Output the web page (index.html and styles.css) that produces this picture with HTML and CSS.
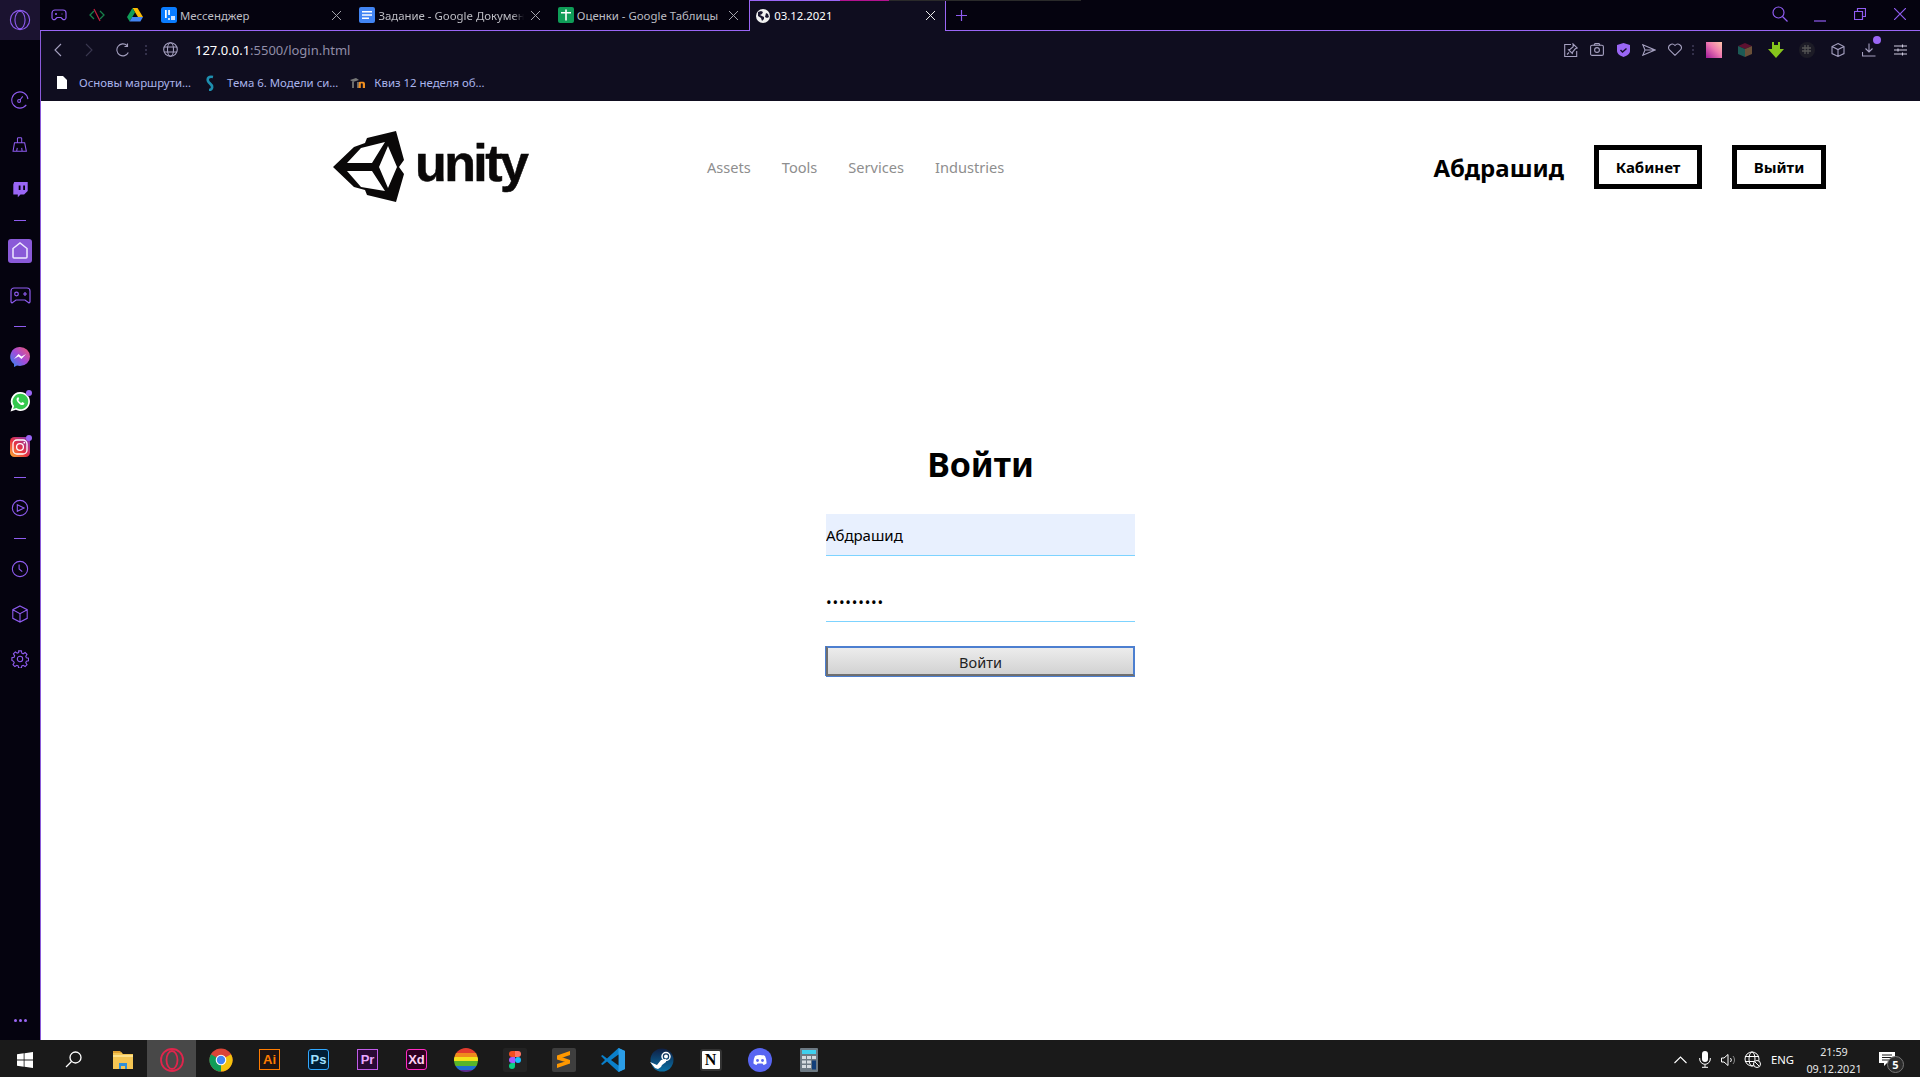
FILE: index.html
```html
<!DOCTYPE html>
<html lang="ru">
<head>
<meta charset="utf-8">
<title>03.12.2021</title>
<link rel="stylesheet" href="styles.css">
</head>
<body>
<div class="window">
  <aside class="sidebar">
    <div class="side-logo"><svg width="22" height="22" viewBox="0 0 24 24" class="ln"><circle cx="12" cy="12" r="10.5"/><ellipse cx="12" cy="12" rx="5.5" ry="9.5"/></svg></div>
    <div class="side-list">
      <div class="side-item"><svg width="18" height="18" viewBox="0 0 20 20" class="ln"><path d="M17 15.500A9 9 0 1 1 18.800 9"/><circle cx="9" cy="11" r="1.600"/><path d="M10 10l3-4"/></svg></div>
      <div class="side-item"><svg width="16" height="17" viewBox="0 0 18 20" class="ln"><path d="M6 8V3a1 1 0 0 1 1-1h3a1 1 0 0 1 1 1v5M2.500 8h12l2 10H.8zM5 18l.8-4M11.500 18l-.5-4"/></svg></div>
      <div class="side-item"><svg width="17" height="18" viewBox="0 0 18 20"><path class="fl" d="M2 1h15v10l-4 4H9l-3 3v-3H1V4z"/><path class="cut" d="M7 5h2v5H7zM12 5h2v5h-2z"/></svg></div>
      <div class="side-dash"></div>
      <div class="side-item"><div class="home-box"><svg width="16" height="17" viewBox="0 0 16 17" class="wln"><path d="M1 6.500L8 1l7 5.500V15a1 1 0 0 1-1 1H2a1 1 0 0 1-1-1z"/></svg></div></div>
      <div class="side-item"><svg width="21" height="17" viewBox="0 0 21 17" class="ln"><path d="M4 1h13a3 3 0 0 1 3 3v11l-1 1-4-3H6l-4 3-1-1V4a3 3 0 0 1 3-3z"/><circle cx="6.500" cy="7" r="1.800"/><path d="M13 7h4M15 5v4"/></svg></div>
      <div class="side-dash"></div>
      <div class="side-item"><svg width="20" height="20" viewBox="0 0 20 20"><defs><linearGradient id="msg" x1="0" y1="1" x2="1" y2="0"><stop offset="0" stop-color="#2a8cf5"/><stop offset=".5" stop-color="#a44bd8"/><stop offset="1" stop-color="#f5586a"/></linearGradient></defs><path d="M10 0a10 9.500 0 0 1 0 19 11 11 0 0 1-3-.4L4 20v-3A9.500 9.500 0 0 1 10 0z" fill="url(#msg)"/><path d="M4 12l4.500-5 3 2.500L16 7l-4.500 5-3-2.500z" fill="#fff"/></svg></div>
      <div class="side-item badged"><svg width="20" height="20" viewBox="0 0 20 20"><path d="M10.500 0a9.500 9.500 0 1 1-4.700 17.800L.5 19.500l1.700-5A9.500 9.500 0 0 1 10.500 0z" fill="#fff"/><path d="M10.500 1.700a7.800 7.800 0 1 1-4.200 14.400l-3.200 1 1-3A7.800 7.800 0 0 1 10.500 1.700z" fill="#35c94e"/><path d="M7.500 5.500c-1.500 1-1.200 3 .5 5s4 3.200 5.500 2.300c.8-.6 1-1.500.7-1.800l-2-1-.9 1c-1.200-.4-2.500-1.800-3-3l.9-.9-.9-2z" fill="#fff"/></svg><span class="dot"></span></div>
      <div class="side-item badged"><svg width="20" height="20" viewBox="0 0 20 20"><defs><linearGradient id="ig" x1="0" y1="1" x2="1" y2="0"><stop offset="0" stop-color="#fdb333"/><stop offset=".45" stop-color="#e8333f"/><stop offset="1" stop-color="#7c34c4"/></linearGradient></defs><rect width="20" height="20" rx="4.500" fill="url(#ig)"/><rect x="3" y="3" width="14" height="14" rx="4" fill="none" stroke="#fff" stroke-width="1.300"/><circle cx="10" cy="10" r="3.400" fill="none" stroke="#fff" stroke-width="1.300"/><circle cx="14.300" cy="5.700" r=".9" fill="#fff"/></svg><span class="dot"></span></div>
      <div class="side-dash"></div>
      <div class="side-item"><svg width="18" height="18" viewBox="0 0 20 20" class="ln"><circle cx="10" cy="10" r="8.500"/><path d="M7 6.300L14.500 10 7 13.700z"/></svg></div>
      <div class="side-dash"></div>
      <div class="side-item"><svg width="18" height="18" viewBox="0 0 20 20" class="ln"><circle cx="10" cy="10" r="8.500"/><path d="M9 5v5l3.500 3"/></svg></div>
      <div class="side-item"><svg width="18" height="18" viewBox="0 0 20 20" class="ln"><path d="M10 1l8 4.200v9.600L10 19l-8-4.200V5.200zM2 5.200l8 4.400 8-4.400M10 9.600V19"/></svg></div>
      <div class="side-item"><svg width="18" height="18" viewBox="0 0 20 20" class="ln"><circle cx="10" cy="10" r="3"/><path d="M8.500 1h3l.5 2.500 1.500.7 2.200-1.400 2.100 2.100-1.400 2.200.7 1.500 2.400.5v3l-2.400.5-.7 1.500 1.400 2.200-2.100 2.100-2.200-1.400-1.500.7-.5 2.300h-3l-.5-2.300-1.500-.7-2.200 1.400-2.100-2.100 1.400-2.200-.7-1.500L1 11.500v-3l2.400-.5.7-1.500L2.700 4.300l2.100-2.100L7 3.600l1.500-.7z"/></svg></div>
    </div>
    <div class="side-more"><i></i><i></i><i></i></div>
  </aside>
  <div class="browser">
    <div class="tabstrip">
      <div class="pin"><svg width="16" height="12" viewBox="0 0 16 12" class="ln"><path d="M4 1h8a3 3 0 0 1 3 3v5a2 2 0 0 1-3.500 1L10 8.500H6L4.500 10A2 2 0 0 1 1 9V4a3 3 0 0 1 3-3z"/><path d="M4 5h2M5 4v2M10.500 5h1"/></svg></div>
      <div class="pin"><svg width="16" height="16" viewBox="0 0 16 16" fill="none"><path d="M5 4L1 8l4 4M11 4l4 4-4 4" stroke="#17804a" stroke-width="1.300"/><path d="M5 2l6 12" stroke="#c0203f" stroke-width="1.300"/></svg></div>
      <div class="pin"><svg width="16" height="14" viewBox="0 0 16 14"><path d="M5.500 0h5L16 9h-5z" fill="#fbbc04"/><path d="M5.500 0L0 9l2.600 4.500L8 4.500z" fill="#0f9d58"/><path d="M2.600 13.500h10.800L16 9H5.200z" fill="#4285f4"/></svg></div>
      <div class="tab"><svg class="fav" width="16" height="16" viewBox="0 0 16 16"><rect width="16" height="16" rx="2.500" fill="#0a7cff"/><path d="M4 3h1.700v8H4zM7.200 3h1.700v5H7.200z" fill="#fff"/><path d="M10 9h4v4h-4zM7 11h2v2H7z" fill="#cfe4ff"/></svg><span class="tab-title">Мессенджер</span><svg class="x" width="11" height="11" viewBox="0 0 11 11"><path d="M1 1l9 9M10 1l-9 9"/></svg></div>
      <div class="tab"><svg class="fav" width="16" height="16" viewBox="0 0 16 16"><rect width="16" height="16" rx="2" fill="#4285f4"/><path d="M3 4h10v1.500H3zM3 7.200h10v1.500H3zM3 10.400h7v1.500H3z" fill="#fff"/></svg><span class="tab-title tab-fade">Задание - Google Докумен</span><svg class="x" width="11" height="11" viewBox="0 0 11 11"><path d="M1 1l9 9M10 1l-9 9"/></svg></div>
      <div class="tab"><svg class="fav" width="16" height="16" viewBox="0 0 16 16"><rect width="16" height="16" rx="2" fill="#0f9d58"/><path d="M7.200 2.500h1.600V5H13v1.600H8.800V13.500H7.200V6.600H3V5h4.200z" fill="#fff"/></svg><span class="tab-title">Оценки - Google Таблицы</span><svg class="x" width="11" height="11" viewBox="0 0 11 11"><path d="M1 1l9 9M10 1l-9 9"/></svg></div>
      <div class="tab active"><svg class="fav" width="14" height="14" viewBox="0 0 14 14"><circle cx="7" cy="7" r="7" fill="#f1f1f1"/><path d="M2 3l3-1 2 1-1 2-2 1 2 1 2 1v2l-2 2-1-3-3-2zM10 4l2 1 1 3-2 1-2-1z" fill="#1a1730"/></svg><span class="tab-title">03.12.2021</span><svg class="x" width="11" height="11" viewBox="0 0 11 11"><path d="M1 1l9 9M10 1l-9 9"/></svg></div>
      <div class="newtab"><svg width="11" height="11" viewBox="0 0 11 11" class="ln"><path d="M5.500 0v11M0 5.500h11"/></svg></div>
      <div class="loadline"></div>
      <div class="winctl">
        <div class="wc"><svg width="16" height="16" viewBox="0 0 16 16" class="ln"><circle cx="6.500" cy="6.500" r="5.500"/><path d="M10.500 10.500l5 5"/></svg></div>
        <div class="wc"><svg width="12" height="16" viewBox="0 0 12 16" class="ln"><path d="M0 15h12"/></svg></div>
        <div class="wc"><svg width="12" height="12" viewBox="0 0 12 12" class="ln"><path d="M.5 3.500h8v8h-8zM3.500 3.500v-3h8v8h-3"/></svg></div>
        <div class="wc"><svg width="12" height="12" viewBox="0 0 12 12" class="ln"><path d="M0 0l12 12M12 0L0 12"/></svg></div>
      </div>
    </div>
    <div class="content">
      <div class="toolbar">
        <div class="tb-cell tb-first"><svg width="9" height="14" viewBox="0 0 9 14" class="gl"><path d="M8 1L2 7l6 6"/></svg></div>
        <div class="tb-cell"><svg width="9" height="14" viewBox="0 0 9 14" class="gl-dim"><path d="M1 1l6 6-6 6"/></svg></div>
        <div class="tb-cell"><svg width="14" height="14" viewBox="0 0 14 14" class="gl"><path d="M12.300 9.500A6 6 0 1 1 11 2.500M11.500.5v3h-3"/></svg></div>
        <div class="tb-sep"><i></i><i></i><i></i></div>
        <div class="tb-globe"><svg width="15" height="15" viewBox="0 0 15 15" class="gl"><circle cx="7.500" cy="7.500" r="6.800"/><ellipse cx="7.500" cy="7.500" rx="3" ry="6.800"/><path d="M1 5h13M1 10h13"/></svg></div>
        <div class="url"><b>127.0.0.1</b>:5500/login.html</div>
        <div class="tb-right">
          <div class="tr-cell"><svg width="14" height="14" viewBox="0 0 14 14" class="gl"><path d="M7 1.500H.7v12h12V8"/><path d="M9 .8L13.300 5l-2 .8-2.500 3-.5 1.700-3.800-3.800 1.700-.5 3-2.500zM5 9.500l-2 2"/></svg></div>
          <div class="tr-cell"><svg width="14" height="13" viewBox="0 0 14 13" class="gl"><rect x=".6" y="2.200" width="12.800" height="10.200" rx="1.500"/><path d="M4 2.200l1-1.600h4l1 1.600"/><circle cx="7" cy="7" r="2.400"/></svg></div>
          <div class="tr-cell"><svg width="13" height="14" viewBox="0 0 13 14"><path class="fl" d="M6.500 0L13 2v6c0 3-3.500 5-6.500 6C3.500 13 0 11 0 8V2z"/><path d="M3.500 7l2 2 4-3.500" stroke="#14102a" stroke-width="1.500" fill="none"/></svg></div>
          <div class="tr-cell"><svg width="14" height="12" viewBox="0 0 14 12" class="gl"><path d="M.8.8L13 6 .8 11.200 3 6zM3 6h10"/></svg></div>
          <div class="tr-cell"><svg width="14" height="13" viewBox="0 0 14 13" class="gl"><path d="M7 12.300L1.500 7A3.500 3.500 0 0 1 7 2.500 3.500 3.500 0 0 1 12.500 7z"/></svg></div>
          <div class="tb-sep tb-sep-r"><i></i><i></i><i></i></div>
          <div class="ext"><div class="pinkbox"></div></div>
          <div class="ext"><svg width="14" height="14" viewBox="0 0 14 14"><path d="M7 0l7 3-7 3-7-3z" fill="#5c1030"/><path d="M0 3l7 3v8l-7-3z" fill="#1c5a55"/><path d="M14 3L7 6v8l7-3z" fill="#6a5038"/></svg></div>
          <div class="ext"><svg width="16" height="16" viewBox="0 0 16 16"><path d="M4 0h2v3h4V0h2v7h4l-8 9-8-9h4z" fill="#86c51c"/></svg></div>
          <div class="ext"><div class="hash-box"><svg width="9" height="9" viewBox="0 0 9 9"><path d="M3 0v9M6 0v9M0 3h9M0 6h9" stroke="#555" stroke-width="1.300"/></svg></div></div>
          <div class="ext"><svg width="14" height="14" viewBox="0 0 14 14" class="gl"><path d="M7 .6l6 3v7L7 13.400l-6-2.800v-7zM1 3.600l6 3 6-3M7 6.600v6.800"/></svg></div>
          <div class="ext badged"><svg width="14" height="14" viewBox="0 0 14 14" class="gl"><path d="M7 .5v8.500M3.500 5.500L7 9l3.500-3.500M.5 9v4h13"/></svg><span class="dot dot-dl"></span></div>
          <div class="ext ext-last"><svg width="13" height="12" viewBox="0 0 13 12" class="wl"><path d="M0 2h13M0 6h13M0 10h13M8.500.5v3M4 4.500v3M8.500 8.500v3"/></svg></div>
        </div>
      </div>
      <div class="bookmarks">
        <div class="bm bm-a"><svg width="10" height="13" viewBox="0 0 10 13"><path d="M0 0h6l4 4v9H0z" fill="#fff"/></svg><span>Основы маршрути…</span></div>
        <div class="bm bm-b"><svg width="12" height="16" viewBox="0 0 12 16" fill="none"><path d="M9 2C5 1 3 3 4 6s5 3 4 7c-.4 1.500-2 2-3 2" stroke="#1e8fb0" stroke-width="2.600"/></svg><span>Тема 6. Модели си…</span></div>
        <div class="bm bm-c"><svg width="16" height="12" viewBox="0 0 16 12"><path d="M0 3l6-2 3 2-6 2z" fill="#777"/><path d="M2 5h2v6H2zM7 5h2.300v6H7z" fill="#6a6a6a"/><path d="M9 5c3 0 6-1 6 2v4h-2.200V7c0-1-2-1-2-.2V11H8.500z" fill="#f18f1e"/></svg><span>Квиз 12 неделя об…</span></div>
      </div>
      <main class="page">
        <header class="site-head">
          <a class="logo">
            <svg width="72" height="72" viewBox="0 0 72 72"><path d="M0 36L21 16l11-4 2-5L63 0l8 29-5 7 5 7-8 28-29-7-2-5-11-3z" fill="#0a0808"/><path d="M14 32l14-15 24-6-13 21zM14 40h25l13 20-24-4zM55 15l9 21-9 21-9-21z" fill="#fff"/></svg>
            <span class="wordmark">unity</span>
          </a>
          <nav class="nav"><a>Assets</a><a>Tools</a><a>Services</a><a>Industries</a></nav>
          <div class="user">
            <span class="user-name">Абдрашид</span>
            <a class="box-btn box-cab">Кабинет</a>
            <a class="box-btn box-out">Выйти</a>
          </div>
        </header>
        <form class="login">
          <h1>Войти</h1>
          <input class="field filled" type="text" value="Абдрашид">
          <input class="field secret" type="password" value="123456789">
          <button class="submit" type="button">Войти</button>
        </form>
      </main>
    </div>
  </div>
</div>
<footer class="taskbar">
  <div class="tk"><svg width="16" height="16" viewBox="0 0 16 16"><path d="M0 2.300l6.700-1V7.600H0zM7.500 1.200L16 0v7.600H7.500zM0 8.400h6.700v6.300l-6.700-1zM7.500 8.400H16V16l-8.500-1.200z" fill="#fff"/></svg></div>
  <div class="tk"><svg width="17" height="17" viewBox="0 0 17 17" fill="none" stroke="#fff" stroke-width="1.300"><circle cx="10.500" cy="6.500" r="5.500"/><path d="M6.500 10.500L1 16"/></svg></div>
  <div class="tk"><svg width="22" height="20" viewBox="0 0 22 20"><path d="M1 2h8l2 2h10v15H1z" fill="#f4c553"/><path d="M1 1h7l2 2H1z" fill="#e0a030"/><path d="M1 5h20v2H1z" fill="#fde08a"/><path d="M7 13h8v6h-2v-3H9v3H7z" fill="#2f8fd8"/></svg></div>
  <div class="tk tk-on"><svg width="24" height="24" viewBox="0 0 24 24" fill="none" stroke="#e0254c" stroke-width="1.800"><circle cx="12" cy="12" r="11"/><ellipse cx="12" cy="12" rx="5.500" ry="9"/></svg></div>
  <div class="tk"><svg width="24" height="24" viewBox="0 0 24 24"><circle cx="12" cy="12" r="11.500" fill="#db4437"/><path d="M12 12L2 6.200A11.500 11.500 0 0 0 12 23.500z" fill="#0f9d58"/><path d="M12 12l10-5.800A11.500 11.500 0 0 1 12 23.500z" fill="#f4c20d"/><circle cx="12" cy="12" r="5.300" fill="#fff"/><circle cx="12" cy="12" r="4.200" fill="#4285f4"/></svg></div>
  <div class="tk"><div class="adobe a-ai">Ai</div></div>
  <div class="tk"><div class="adobe a-ps">Ps</div></div>
  <div class="tk"><div class="adobe a-pr">Pr</div></div>
  <div class="tk"><div class="adobe a-xd">Xd</div></div>
  <div class="tk"><div class="rainbow"></div></div>
  <div class="tk"><div class="figma-box"><svg width="12" height="18" viewBox="0 0 12 18"><path d="M3 0h3v6H3a3 3 0 0 1 0-6z" fill="#f24e1e"/><path d="M6 0h3a3 3 0 0 1 0 6H6z" fill="#ff7262"/><path d="M3 6h3v6H3a3 3 0 0 1 0-6z" fill="#a259ff"/><circle cx="9" cy="9" r="3" fill="#1abcfe"/><path d="M3 12h3v3a3 3 0 1 1-3-3z" fill="#0acf83"/></svg></div></div>
  <div class="tk"><div class="sublime-box"><svg width="13" height="17" viewBox="0 0 13 17"><path d="M13 0v4L0 8.500v-4zM0 4.500l13 4.500v3.500L0 8.500zM13 9v3.500L0 17v-4z" fill="#ff9800"/></svg></div></div>
  <div class="tk"><svg width="24" height="24" viewBox="0 0 24 24"><path d="M17.500 0L24 3v18l-6.500 3L6 13.500l-4.500 3.500L0 16l4-4-4-4 1.500-1L6 10.500z" fill="#0a7fc9"/><path d="M17.500 0L24 3v18l-6.500 3z" fill="#2b9ee8"/><path d="M17.500 6.500L10 12l7.500 5.500z" fill="#1a1a1a"/></svg></div>
  <div class="tk"><svg width="24" height="24" viewBox="0 0 24 24"><defs><linearGradient id="st" x1="0" y1="0" x2="0" y2="1"><stop offset="0" stop-color="#0f1f44"/><stop offset="1" stop-color="#0a72a8"/></linearGradient></defs><circle cx="12" cy="12" r="11.500" fill="url(#st)"/><path d="M0 14l7 3 4-5 5-1v3l-4 3-1 2-3 2-3-1z" fill="#fff"/><circle cx="16" cy="8.500" r="4" fill="none" stroke="#fff" stroke-width="1.500"/><circle cx="16" cy="8.500" r="2" fill="#fff"/></svg></div>
  <div class="tk"><div class="notion">N</div></div>
  <div class="tk"><svg width="24" height="24" viewBox="0 0 24 24"><circle cx="12" cy="12" r="12" fill="#5865f2"/><path d="M7 8c3-1.500 7-1.500 10 0 1.200 2.500 1.700 5 1.500 7.500-1 .8-2 1.200-3 1.500l-1-1.500H9.500l-1 1.500c-1-.3-2-.7-3-1.500C5.300 13 5.800 10.500 7 8z" fill="#fff"/><circle cx="9.500" cy="12.500" r="1.400" fill="#5865f2"/><circle cx="14.500" cy="12.500" r="1.400" fill="#5865f2"/></svg></div>
  <div class="tk"><svg width="18" height="24" viewBox="0 0 18 24"><rect width="18" height="24" rx="1" fill="#6d7a84"/><rect x="2" y="2" width="14" height="4" fill="#3fd0ee"/><path d="M2 8h4v3H2zM7 8h4v3H7zM12 8h4v3h-4zM2 12.500h4v3H2zM7 12.500h4v3H7zM2 17h4v3H2zM7 17h4v3H7z" fill="#d5dbe0"/><rect x="12" y="12.500" width="4" height="9" fill="#123f7a"/></svg></div>
  <div class="tray">
    <svg class="tr-caret" width="13" height="8" viewBox="0 0 13 8" fill="none" stroke="#fff" stroke-width="1.100"><path d="M.5 7l6-6 6 6"/></svg>
    <svg class="tr-mic" width="12" height="17" viewBox="0 0 12 17"><rect x="3" y="0" width="6" height="11" rx="3" fill="#fff"/><path d="M.7 7v1a5.300 5.300 0 0 0 10.600 0V7M6 13.500V16M3 16.300h6" stroke="#fff" fill="none"/></svg>
    <svg class="tr-sound" width="16" height="14" viewBox="0 0 16 14" fill="none" stroke="#fff"><path d="M.5 5v4h2.500L7 12.500V1.500L3 5zM9.500 5a3 3 0 0 1 0 4"/><path d="M12 3a6 6 0 0 1 0 8" stroke="#888"/></svg>
    <svg class="tr-globe" width="17" height="17" viewBox="0 0 17 17" fill="none" stroke="#fff"><circle cx="8" cy="8" r="7"/><ellipse cx="8" cy="8" rx="3" ry="7"/><path d="M1 5.500h14M1 10.500h14"/><circle cx="13" cy="13" r="3.500" fill="#1a1a1a"/><path d="M11 11l4 4"/></svg>
    <span class="tr-lang">ENG</span>
    <div class="tr-clock"><span>21:59</span><span>09.12.2021</span></div>
    <div class="tr-note"><svg width="16" height="15" viewBox="0 0 16 15"><path d="M0 0h16v11H8l-3 3v-3H0z" fill="#fff"/><path d="M3 3h10M3 5.500h10M3 8h7" stroke="#1a1a1a"/></svg><span class="note-badge">5</span></div>
  </div>
</footer>
</body>
</html>
```

FILE: styles.css
```css
* { box-sizing: border-box; }
html, body { margin: 0; padding: 0; }
body {
  width: 1920px; height: 1077px; overflow: hidden;
  display: flex; flex-direction: column;
  font-family: "Noto Sans", "Open Sans", sans-serif;
  background: #fff;
}
svg { display: block; flex: none; }
.ln { fill: none; stroke: #8f5cf0; stroke-width: 1.200; }
.wln { fill: none; stroke: #eee9ff; stroke-width: 1.500; }
.gl { fill: none; stroke: #a5a0c0; stroke-width: 1.100; }
.gl-dim { fill: none; stroke: #3a3750; stroke-width: 1.100; }
.wl { fill: none; stroke: #cfcbe0; stroke-width: 1.100; }
.fl { fill: #9a66f5; }
.cut { fill: #05030f; }

.window { flex: 1; display: flex; min-height: 0; }

/* sidebar */
.sidebar { width: 40px; flex: none; background: #05030f; display: flex; flex-direction: column; }
.side-logo { height: 40px; background: #1b1330; display: flex; align-items: center; justify-content: center; }
.side-list { padding-top: 37px; }
.side-item { height: 45px; display: flex; align-items: center; justify-content: center; position: relative; }
.side-dash { height: 16px; display: flex; align-items: center; justify-content: center; }
.side-dash::before { content: ""; width: 12px; height: 1px; background: #8f5cf0; }
.home-box { width: 24px; height: 24px; border-radius: 3px; background: #8a5ad8; display: flex; align-items: center; justify-content: center; }
.dot { position: absolute; width: 6px; height: 6px; border-radius: 50%; background: #9a66f5; right: 8px; top: 11px; }
.side-more { margin-top: auto; height: 40px; display: flex; align-items: center; justify-content: center; gap: 2px; }
.side-more i { width: 3px; height: 3px; border-radius: 50%; background: #9a66f5; }

/* tab strip */
.browser { flex: 1; min-width: 0; display: flex; flex-direction: column; }
.tabstrip { height: 31px; flex: none; display: flex; background: #05030f; border-bottom: 1px solid #9a66f5; position: relative; }
.pin { width: 38px; height: 30px; flex: none; display: flex; align-items: center; justify-content: center; }
.tab { width: 198.400px; height: 30px; flex: none; display: flex; align-items: center; padding: 0 10px 0 7px; color: #bdbdc4; font-size: 11.400px; }
.fav { margin-right: 3px; }
.tab-title { flex: 1; min-width: 0; white-space: nowrap; }
.tab-fade { -webkit-mask-image: linear-gradient(to left, transparent, #000 12px); mask-image: linear-gradient(to left, transparent, #000 12px); }
.x { margin-left: 6px; fill: none; stroke: #a3a3ab; stroke-width: 1; }
.tab.active { width: 197px; height: 31px; margin-bottom: -1px; background: #0f0d1f; border-left: 1px solid #9a66f5; border-right: 1px solid #9a66f5; color: #fff; padding-left: 6px; padding-right: 9px; position: relative; }
.tab.active .fav { margin-right: 4px; }
.tab.active .x { stroke: #eee; }
.newtab { width: 30px; height: 30px; display: flex; align-items: center; justify-content: center; }
.loadline { position: absolute; left: 710px; top: 0; width: 331px; height: 1px; background: linear-gradient(to right, #9a66f5 0 90px, #b3118f 90px 139px, #2a2a2a 139px); }
.winctl { margin-left: auto; height: 30px; display: flex; align-items: center; padding-bottom: 2px; }
.wc { width: 40px; display: flex; justify-content: center; }

/* toolbar */
.content { flex: 1; min-height: 0; border-left: 1px solid #8a5ad8; display: flex; flex-direction: column; }
.toolbar { height: 37px; flex: none; background: #0f0d1f; display: flex; align-items: center; }
.tb-cell { width: 33px; display: flex; justify-content: center; }
.tb-first { width: 32px; }
.tb-sep { width: 14px; display: flex; flex-direction: column; align-items: center; gap: 2px; }
.tb-sep i { width: 2px; height: 2px; background: #33304a; }
.tb-sep-r { width: 10px; }
.tb-globe { width: 34px; display: flex; justify-content: center; }
.url { margin-left: 8px; font-size: 13px; color: #918da8; white-space: nowrap; }
.url b { font-weight: 400; color: #fff; }
.tb-right { margin-left: auto; display: flex; align-items: center; padding-right: 3px; }
.tr-cell { width: 26px; display: flex; justify-content: center; }
.ext { width: 31px; display: flex; justify-content: center; align-items: center; position: relative; height: 20px; }
.ext-last { width: 33px; }
.pinkbox { width: 16px; height: 16px; background: linear-gradient(45deg, #a01a9a, #f07ab0 55%, #ffc5a8); }
.hash-box { width: 16px; height: 16px; border-radius: 50%; background: #1c1b26; display: flex; align-items: center; justify-content: center; }
.dot-dl { width: 8px; height: 8px; right: 3px; top: -4px; }

/* bookmarks */
.bookmarks { height: 33px; flex: none; background: #0f0d1f; display: flex; align-items: center; padding: 0 0 4px 16px; font-size: 11.400px; color: #aab4ec; }
.bm { display: flex; align-items: center; white-space: nowrap; }
.bm-a { margin-right: 13px; }
.bm-b { margin-right: 12px; }
.bm-a svg { margin-right: 12px; }
.bm-b svg { margin-right: 11px; }
.bm-c svg { margin-right: 8px; }

/* page */
.page { flex: 1; min-height: 0; background: #fff; color: #000; }
.site-head { height: 132px; display: flex; align-items: center; padding: 0 94px 0 292px; }
.logo { width: 197px; flex: none; display: flex; align-items: center; gap: 10px; }
.wordmark { font-family: "Liberation Sans", sans-serif; font-weight: 700; font-size: 52px; line-height: 50px; letter-spacing: -2.600px; color: #0a0808; -webkit-text-stroke: .5px #0a0808; margin-bottom: 9px; }
.nav { margin-left: 177px; display: flex; gap: 31px; font-size: 14.600px; color: #8e8e8e; }
.user { margin-left: auto; display: flex; align-items: center; gap: 30px; }
.user-name { font-size: 24px; font-weight: 700; }
.box-btn { height: 44px; border: 5px solid #000; display: flex; align-items: center; justify-content: center; font-size: 15px; font-weight: 700; }
.box-cab { width: 108px; }
.box-out { width: 94px; }
.login { width: 309px; margin: 207px auto 0; display: flex; flex-direction: column; }
.login h1 { margin: 0 0 26px; font-size: 34px; line-height: 48px; font-weight: 700; text-align: center; }
.field { height: 42px; border: 0; border-bottom: 1px solid #7dd3ff; outline: 0; padding: 0; margin: 0 0 24px; font: inherit; font-size: 15px; color: #000; background: #fff; }
.field.filled { background: #e8f0fe; }
.field.secret { padding-top: 2px; letter-spacing: .8px; }
.submit { height: 30px; border: 2px solid #6f6f6f; border-top-color: #4c7fd0; border-right-color: #4c7fd0; outline: 0; box-shadow: 0 1px 0 #4c7fd0, -1px 0 0 #4c7fd0; background: linear-gradient(#ececec, #d2d2d2); font: inherit; font-size: 14.500px; color: #222; padding: 1px 0 0; }

/* taskbar */
.taskbar { height: 37px; flex: none; background: #1a1a1a; display: flex; align-items: center; color: #fff; }
.tk { width: 49px; height: 37px; flex: none; display: flex; align-items: center; justify-content: center; padding-top: 2px; }
.tk-on { background: #484848; }
.adobe { width: 21px; height: 21px; font-family: "Liberation Sans", sans-serif; font-size: 13px; font-weight: 700; display: flex; align-items: center; justify-content: center; border: 1.500px solid; background: #1e1414; }
.a-ai { color: #ff7c00; border-color: #ff7c00; }
.a-ps { color: #9fe0ff; border-color: #31a8ff; border-radius: 3px; background: #001e36; }
.a-pr { color: #e9a8ff; border-color: #c05ce8; background: #2a0a34; }
.a-xd { color: #ffd0f0; border-color: #ff2bc2; border-radius: 3px; background: #2e001f; }
.rainbow { width: 24px; height: 24px; border-radius: 50%; background: linear-gradient(#e23b2e 0 20%, #f08a1d 20% 38%, #f5e11a 38% 55%, #58b52a 55% 75%, #1f6fd0 75% 90%, #5a2a90 90%); }
.figma-box { width: 24px; height: 24px; background: #232323; border-radius: 2px; display: flex; align-items: center; justify-content: center; }
.sublime-box { width: 24px; height: 24px; background: #3e3e3e; border-radius: 2px; display: flex; align-items: center; justify-content: center; }
.notion { width: 22px; height: 22px; background: #fff; color: #000; border: 2px solid #333; border-radius: 3px; font-family: "Liberation Serif", serif; font-weight: 700; font-size: 16px; display: flex; align-items: center; justify-content: center; }
.tray { margin-left: auto; height: 37px; display: flex; align-items: center; padding-top: 2px; }
.tr-caret { margin-right: 12px; }
.tr-mic { margin-right: 10px; }
.tr-sound { margin-right: 7px; }
.tr-globe { margin-right: 10px; }
.tr-lang { font-size: 11.300px; width: 26px; margin-right: 8px; }
.tr-clock { width: 58px; display: flex; flex-direction: column; align-items: center; font-size: 10.800px; line-height: 17px; color: #e8e8e8; margin-right: 16px; }
.tr-note { width: 41px; height: 37px; position: relative; display: flex; align-items: center; }
.note-badge { position: absolute; left: 8px; top: 15px; width: 17px; height: 17px; border-radius: 50%; background: #2b2b2b; border: 1px solid #777; font-size: 11px; font-weight: 700; line-height: 15px; text-align: center; }
```
